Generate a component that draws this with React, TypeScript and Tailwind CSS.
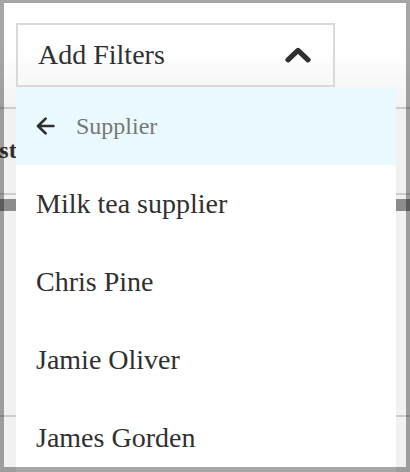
import React from "react";

const suppliers = ["Milk tea supplier", "Chris Pine", "Jamie Oliver", "James Gorden"];

function ChevronUp() {
  return (
    <svg width="26" height="16" viewBox="0 0 26 16" fill="none" aria-hidden>
      <polyline
        points="3,12.8 13,3.4 23,12.8"
        stroke="#2f2f2f"
        strokeWidth="5.2"
        strokeLinecap="round"
        strokeLinejoin="round"
      />
    </svg>
  );
}

function ArrowLeft() {
  return (
    <svg width="19" height="18" viewBox="0 0 19 18" fill="none" aria-hidden>
      <path
        d="M9.6 1.6 L2 9 L9.6 16.4 M2.6 9 H17.4"
        stroke="#2f2f2f"
        strokeWidth="2.7"
        strokeLinecap="round"
        strokeLinejoin="round"
      />
    </svg>
  );
}

function FilterDropdown() {
  return (
    <div className="relative w-[319px]">
      <button
        type="button"
        className="flex h-[64px] w-full items-center justify-between border-2 border-[#dadada] pl-[20px] pr-[22px] text-[28px] text-[#303030]"
      >
        <span>Add Filters</span>
        <ChevronUp />
      </button>

      {/* open menu sits over the page below */}
      <div className="absolute left-0 top-[64px] z-10 w-[380px] bg-white">
        <div className="flex h-[78px] items-center bg-[#eaf9fe] pl-[20px]">
          <ArrowLeft />
          <span className="ml-[21px] text-[24px] text-[#777777]">Supplier</span>
        </div>
        {suppliers.map((name) => (
          <div
            key={name}
            className="flex h-[78px] items-center pl-[20px] text-[28px] text-[#303030]"
          >
            {name}
          </div>
        ))}
      </div>
    </div>
  );
}

export default function App() {
  return (
    <div className="relative h-[472px] w-[410px] overflow-hidden bg-[#f1f1f1] font-['Liberation_Serif','Times_New_Roman',serif]">
      <div className="flex h-[107px] flex-col bg-linear-to-b from-white from-45% to-[#f3f3f3] pl-[16px] pt-[23px]">
        <FilterDropdown />
      </div>
      <div className="h-[2px] bg-[#cbcbcb]" />
      <div className="h-[84px] bg-[#f1f1f1] pt-[29px]">
        <div className="ml-[-30px] text-[24px] font-bold leading-[24px] text-[#303030]">
          Cost
        </div>
      </div>
      <div className="h-[2px] bg-[#cdcdcd]" />
      <div className="h-[4px] bg-[#f1f1f1]" />
      <div className="h-[12px] bg-[#8c8c8c]" />
      <div className="h-[204px] bg-[#f1f1f1]" />
      <div className="h-[2px] bg-[#cdcdcd]" />
      <div className="h-[55px] bg-[#f1f1f1]" />

      {/* dimmed frame over the page edges */}
      <div className="pointer-events-none absolute inset-0 z-20 border-b-[5px] border-l-[4px] border-r-[4px] border-t-[3px] border-black/35" />
    </div>
  );
}
